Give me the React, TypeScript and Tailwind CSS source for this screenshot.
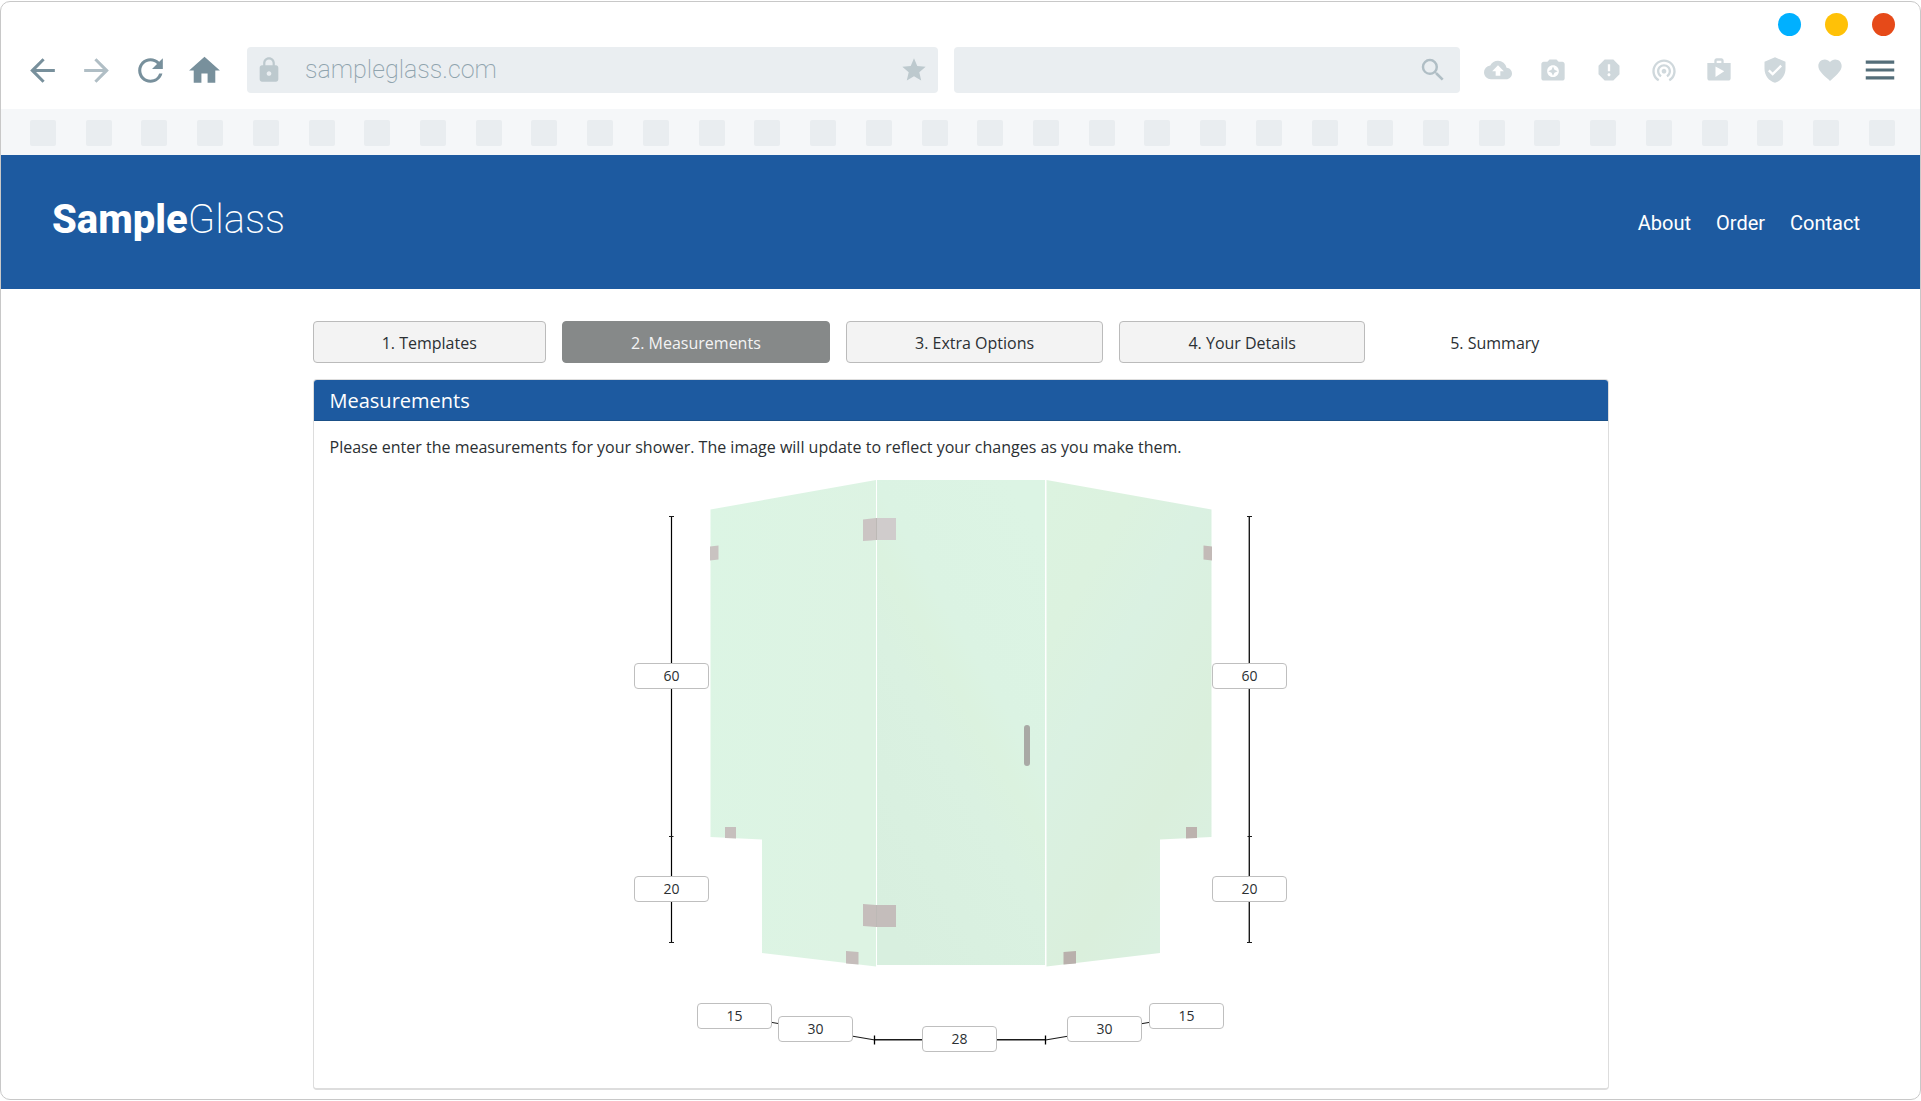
import { useState } from "react";
import {
  MdArrowBack,
  MdArrowForward,
  MdCameraEnhance,
  MdCloudUpload,
  MdFavorite,
  MdHome,
  MdLock,
  MdMenu,
  MdRefresh,
  MdReport,
  MdSearch,
  MdShop,
  MdStar,
  MdVerifiedUser,
  MdWifiTethering
} from "react-icons/md";

interface Measurement {
  id: string;
  label: string;
  value: string;
  position: string;
}

const steps = [
  "1. Templates",
  "2. Measurements",
  "3. Extra Options",
  "4. Your Details",
  "5. Summary"
];

const extensions = [
  { label: "Upload", Icon: MdCloudUpload },
  { label: "Capture", Icon: MdCameraEnhance },
  { label: "Report", Icon: MdReport },
  { label: "Cast", Icon: MdWifiTethering },
  { label: "Store", Icon: MdShop },
  { label: "Security", Icon: MdVerifiedUser },
  { label: "Favorites", Icon: MdFavorite }
];

const initialMeasurements: Measurement[] = [
  { id: "leftUpper", label: "Left upper height", value: "60", position: "left-0 top-[187px]" },
  { id: "leftLower", label: "Left lower height", value: "20", position: "left-0 top-[400px]" },
  { id: "rightUpper", label: "Right upper height", value: "60", position: "left-[578px] top-[187px]" },
  { id: "rightLower", label: "Right lower height", value: "20", position: "left-[578px] top-[400px]" },
  { id: "leftLedge", label: "Left ledge width", value: "15", position: "left-[63px] top-[527px]" },
  { id: "leftPanel", label: "Left panel width", value: "30", position: "left-[144px] top-[540px]" },
  { id: "door", label: "Door width", value: "28", position: "left-[288px] top-[550px]" },
  { id: "rightPanel", label: "Right panel width", value: "30", position: "left-[433px] top-[540px]" },
  { id: "rightLedge", label: "Right ledge width", value: "15", position: "left-[515px] top-[527px]" }
];

function BrowserBar() {
  return (
    <div>
      <div className="flex h-[45px] items-center justify-end gap-6 pr-[25px]">
        <span className="size-[23px] rounded-full bg-[#00b0ff]" />
        <span className="size-[23px] rounded-full bg-[#ffc107]" />
        <span className="size-[23px] rounded-full bg-[#e64a19]" />
      </div>
      <div className="flex h-[62px] items-start pr-[21px] pl-[23px] font-[Roboto,sans-serif]">
        <div className="flex h-[46px] items-center gap-[17px] text-[37px] text-[#78909c]">
          <button aria-label="Back">
            <MdArrowBack />
          </button>
          <button aria-label="Forward" className="text-[#b0bec5]">
            <MdArrowForward />
          </button>
          <button aria-label="Reload">
            <MdRefresh />
          </button>
          <button aria-label="Home">
            <MdHome />
          </button>
        </div>
        <div className="ml-6 flex h-[46px] flex-[7] items-center rounded-sm bg-[#eaeef1] px-2 text-[#bdc9ce]">
          <MdLock className="size-7" />
          <input
            aria-label="Address"
            defaultValue="sampleglass.com"
            className="ml-[22px] min-w-0 flex-1 bg-transparent text-[25px] leading-8 font-extralight text-[#90a4ae] outline-none"
          />
          <MdStar className="mr-0.5 size-7" />
        </div>
        <div className="ml-4 flex h-[46px] flex-[5] items-center rounded-sm bg-[#eaeef1] px-3 text-[#b0bec5]">
          <input
            aria-label="Search"
            className="min-w-0 flex-1 bg-transparent text-2xl font-light outline-none"
          />
          <MdSearch className="size-[30px]" />
        </div>
        <div className="ml-6 flex h-[46px] w-[360px] items-center justify-between text-[28px] text-[#cfd8dc]">
          {extensions.map(({ label, Icon }) => (
            <button key={label} aria-label={label}>
              <Icon />
            </button>
          ))}
        </div>
        <button aria-label="Menu" className="ml-[17px] flex h-[46px] items-center text-[38px] text-[#546e7a]">
          <MdMenu />
        </button>
      </div>
      <div className="flex h-[46px] items-center justify-between bg-[#f5f7f9] pt-px pr-[25px] pl-[29px]">
        {Array.from({ length: 34 }, (_, i) => (
          <span key={i} className="size-[26px] rounded-xs bg-[#e9edf0]" />
        ))}
      </div>
    </div>
  );
}

function SiteHeader() {
  return (
    <header className="flex h-[134px] items-center justify-between bg-[#1d5aa0] pr-[60px] pl-[51px] font-[Roboto,sans-serif] text-white">
      <a href="#" className="pb-1 text-[40px] leading-[48px] font-extralight">
        <span className="font-extrabold">Sample</span>Glass
      </a>
      <nav className="flex gap-[25px] pt-0.5 text-xl">
        <a href="#about">About</a>
        <a href="#order">Order</a>
        <a href="#contact">Contact</a>
      </nav>
    </header>
  );
}

function ShowerDrawing() {
  return (
    <svg viewBox="634 476 653 600" width="653" height="600" className="block" aria-hidden="true">
      <defs>
        <linearGradient id="glassLeft" x1="0" y1="0" x2="1" y2="0.3">
          <stop offset="0" stopColor="#dcf5e4" />
          <stop offset="1" stopColor="#ddf3e3" />
        </linearGradient>
        <linearGradient id="glassDoor" x1="0.8" y1="0" x2="0.2" y2="1">
          <stop offset="0" stopColor="#dcf4e4" />
          <stop offset="0.36" stopColor="#dbf3e3" />
          <stop offset="0.46" stopColor="#dbf2df" />
          <stop offset="0.58" stopColor="#daf1e1" />
          <stop offset="1" stopColor="#d8efdf" />
        </linearGradient>
        <linearGradient id="glassRight" x1="0" y1="0" x2="0.6" y2="1">
          <stop offset="0" stopColor="#dcf3e0" />
          <stop offset="0.25" stopColor="#dcf2df" />
          <stop offset="0.45" stopColor="#daf1e2" />
          <stop offset="0.8" stopColor="#daefdc" />
          <stop offset="1" stopColor="#daf0e0" />
        </linearGradient>
      </defs>

      {/* Glass */}
      <path d="M710.5 509.5 876 480V966.5L762 953V839.5L710.5 837Z" fill="url(#glassLeft)" />
      <path d="M877 480H1045V965H877Z" fill="url(#glassDoor)" />
      <path d="M1046.5 480 1211.5 509.5V837L1160 839.5V953L1046.5 966.5Z" fill="url(#glassRight)" />

      {/* Hinges */}
      <path d="M863 519.5 876 518V540L871 540.5 863 541Z" fill="#cbc4c3" />
      <path d="M876 518H896V540H876Z" fill="#d0cccc" />
      <path d="M863 904 876 905V927L863 926Z" fill="#c5bdbb" />
      <path d="M876 905H896V927H876Z" fill="#c4bdbb" />
      <path d="M876.5 518V540M876.5 905V927" stroke="#bdb9b6" />

      {/* Clips */}
      <path d="M710 546.5 718.5 545.5V559.5L710 560.5Z" fill="#c9c3c1" />
      <path d="M1203.5 545.5 1212 546.5V560.5L1203.5 559.5Z" fill="#c3bab7" />
      <path d="M725 827H736V838.5L725 838Z" fill="#c6bfbd" />
      <path d="M1186 827H1197V838L1186 838.5Z" fill="#bcb2ae" />
      <path d="M846 951 858.5 952V964.5L846 963.5Z" fill="#c5bdbb" />
      <path d="M1063.5 952 1076 951V963.5L1063.5 964.5Z" fill="#b9b0ac" />

      {/* Door handle */}
      <rect x="1024" y="725" width="6" height="41" rx="3" fill="#a9a9a5" />

      {/* Dimension lines */}
      <g stroke="#1b1b1b" fill="none">
        <path d="M671.5 516V943" stroke="#000000" strokeWidth="1.2" />
        <path d="M1249.3 516V943" strokeWidth="1.4" />
        <path d="M669 516.5H674M669 836.5H673.5M669 942.5H674" />
        <path d="M1247 516.5H1252M1247.5 836.5H1252M1247 942.5H1252" />
        <path d="M740 1017 875 1040M1045.5 1040 1181 1017" strokeWidth="1.2" />
        <path d="M875 1039.7H1045.5" strokeWidth="1.5" />
        <path d="M874.5 1035.5V1044.5M1045.5 1035.5V1044.5" stroke="#000000" strokeWidth="1.3" />
      </g>
    </svg>
  );
}

export default function App() {
  const [activeStep, setActiveStep] = useState(1);
  const [measurements, setMeasurements] = useState(initialMeasurements);

  const updateMeasurement = (id: string, value: string) => {
    setMeasurements((current) => current.map((m) => (m.id === id ? { ...m, value } : m)));
  };

  const stepClass = (index: number) => {
    if (index === activeStep) return "border-[#868989] bg-[#868989] text-[#f4f4f4]";
    if (index === steps.length - 1) return "border-transparent text-[#2b3033]";
    return "border-[#bbbbbb] bg-[#f3f3f3] text-[#2b3033]";
  };

  return (
    <div className="flex min-h-screen flex-col bg-white py-px font-['Open_Sans',sans-serif] text-[#2b3033]">
      <div className="flex-1 overflow-hidden rounded-[10px] border border-[#c8c8c8]">
        <BrowserBar />
        <SiteHeader />

        <main className="mx-auto w-full max-w-[1296px] pt-8 pb-[9px]">
          <div className="flex gap-4">
            {steps.map((step, index) => (
              <button
                key={step}
                onClick={() => setActiveStep(index)}
                className={`h-[42px] grow rounded border pt-0.5 text-base ${stepClass(index)}`}
              >
                {step}
              </button>
            ))}
          </div>

          <section className="mt-4 overflow-hidden rounded border border-b-2 border-[#dddddd]">
            <h2 className="h-[41px] border-b border-[#1b5087] bg-[#1d5aa0] px-4 text-xl leading-[42px] text-white">
              Measurements
            </h2>
            <div className="px-4 pt-[14px] pb-3">
              <p className="text-base">
                Please enter the measurements for your shower. The image will update to reflect your
                changes as you make them.
              </p>
              <div className="relative mx-auto mt-[17px] w-[653px]">
                <ShowerDrawing />
                {measurements.map((m) => (
                  <input
                    key={m.id}
                    aria-label={m.label}
                    value={m.value}
                    onChange={(e) => updateMeasurement(m.id, e.target.value)}
                    className={`absolute h-[26px] w-[75px] rounded border border-[#bfbfbf] bg-white pb-0.5 text-center text-sm ${m.position}`}
                  />
                ))}
              </div>
            </div>
          </section>
        </main>
      </div>
    </div>
  );
}
